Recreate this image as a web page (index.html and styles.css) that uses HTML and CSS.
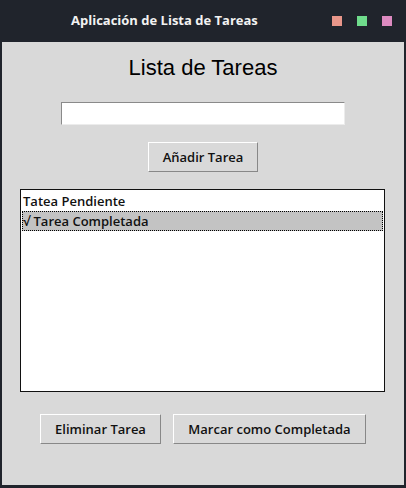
FILE: index.html
```html
<!DOCTYPE html>
<html lang="es">

<head>
    <meta charset="UTF-8">
    <meta name="viewport" content="width=device-width, initial-scale=1.0">
    <title>Aplicación de Lista de Tareas</title>
    <link rel="stylesheet" href="styles.css">
</head>

<body>
    <div class="titlebar">
        <span class="titlebar-text">Aplicación de Lista de Tareas</span>
        <div class="titlebar-controls">
            <span class="ctrl ctrl-red"></span>
            <span class="ctrl ctrl-green"></span>
            <span class="ctrl ctrl-pink"></span>
        </div>
    </div>

    <div class="window">
        <h1 class="app-title">Lista de Tareas</h1>
        <input type="text" class="task-entry" id="task-entry">
        <button class="tk-btn add-btn">Añadir Tarea</button>

        <ul class="task-list">
            <li class="task-item">Tatea Pendiente</li>
            <li class="task-item selected">√ Tarea Completada</li>
        </ul>

        <div class="actions">
            <button class="tk-btn delete-btn">Eliminar Tarea</button>
            <button class="tk-btn done-btn">Marcar como Completada</button>
        </div>
    </div>
</body>

</html>
```

FILE: styles.css
```css
* {
    margin: 0;
    padding: 0;
    box-sizing: border-box;
}

body {
    width: 406px;
    height: 488px;
    background-color: #20242c;
    font-family: "Open Sans", "Noto Sans", sans-serif;
    display: flex;
    flex-direction: column;
    overflow: hidden;
}

.titlebar {
    height: 42px;
    display: flex;
    align-items: center;
}

.titlebar-text {
    color: #f2f2f2;
    font-weight: bold;
    font-size: 13px;
    margin-left: 71px;
    margin-top: -2px;
}

.titlebar-controls {
    display: flex;
    gap: 15px;
    margin-left: auto;
    margin-right: 14px;
    margin-top: -1px;
}

.ctrl {
    width: 10px;
    height: 10px;
    display: block;
}

.ctrl-red {
    background-color: #e8968a;
}

.ctrl-green {
    background-color: #6fdc8c;
}

.ctrl-pink {
    background-color: #dc8ac0;
}

.window {
    flex: 1;
    background-color: #d9d9d9;
    margin: 0 2px 3px 2px;
    display: flex;
    flex-direction: column;
    align-items: center;
    padding-top: 13px;
}

.app-title {
    font-family: "Liberation Sans", Arial, sans-serif;
    font-weight: normal;
    font-size: 22px;
    line-height: 26px;
    color: #000;
}

.task-entry {
    width: 284px;
    height: 23px;
    margin-top: 21px;
    background-color: #fff;
    border: 1px solid;
    border-color: #8a8a8a #ececec #ececec #8a8a8a;
    outline: none;
}

.tk-btn {
    height: 30px;
    background-color: #d9d9d9;
    border: 1px solid;
    border-color: #ffffff #888888 #888888 #ffffff;
    font-family: "Open Sans", "Noto Sans", sans-serif;
    font-weight: 600;
    font-size: 13px;
    color: #111;
    cursor: pointer;
}

.add-btn {
    width: 110px;
    margin-top: 17px;
}

.task-list {
    list-style: none;
    width: 365px;
    height: 203px;
    margin-top: 17px;
    margin-left: -1px;
    background-color: #fff;
    border: 1px solid #111;
    padding: 1px;
}

.task-item {
    font-size: 13px;
    font-weight: 600;
    color: #111;
    line-height: 18px;
    border: 1px solid transparent;
    white-space: nowrap;
}

.task-item.selected {
    background-color: #c3c3c3;
    border: 1px dotted #000;
}

.actions {
    display: flex;
    gap: 12px;
    margin-top: 22px;
}

.delete-btn {
    width: 121px;
}

.done-btn {
    width: 193px;
}
```
